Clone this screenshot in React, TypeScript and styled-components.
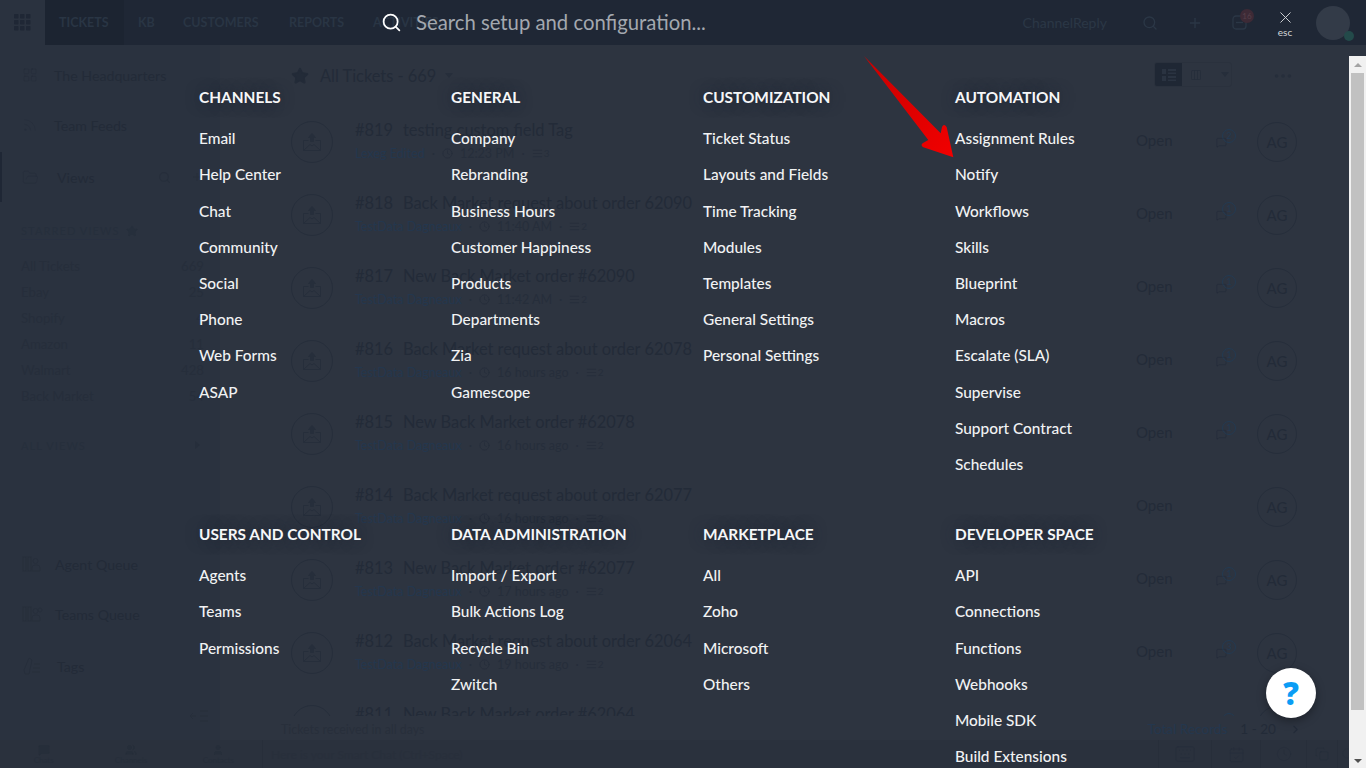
import React from "react";
import styled, { createGlobalStyle } from "styled-components";
import {
  LayoutGrid, Rss, FolderOpen, Search, Plus, Star, X, Clock, Keyboard, ChevronRight,
  MoreHorizontal, MessageSquare, User, Users, Columns3, CalendarCheck, Copy, AlignJustify,
} from "lucide-react";

const Global = createGlobalStyle`
  html, body { margin: 0; padding: 0; height: 100%; overflow: hidden; background: #2d3440; }
  * { box-sizing: border-box; }
  body { font-family: Lato, "Liberation Sans", sans-serif; }
`;

const dim = "#232b38";
const dimLine = "#262e3b";
const dimBlue = "#24374e";

const Page = styled.div`
  position: relative;
  width: 1366px;
  height: 768px;
  overflow: hidden;
  display: flex;
  flex-direction: column;
  background: #2d3440;
  color: ${dim};
`;

/* ---------- dimmed application behind the overlay ---------- */
const TopBar = styled.header`
  height: 45px;
  flex: none;
  display: flex;
  align-items: center;
  background: #1f2735;
`;
const AppTile = styled.div`
  width: 45px;
  height: 45px;
  display: flex;
  align-items: center;
  justify-content: center;
  background: #2a323f;
  color: #1f2735;
`;
const NavTab = styled.div<{ $active?: boolean; $width: number }>`
  width: ${(p) => p.$width}px;
  height: 45px;
  padding-left: 14px;
  display: flex;
  align-items: center;
  font-size: 12.5px;
  font-weight: 700;
  color: #293544;
  background: ${(p) => (p.$active ? "#1c2431" : "transparent")};
`;
const TopRight = styled.div`
  margin-left: auto;
  display: flex;
  align-items: center;
  height: 45px;
  padding-right: 16px;
`;
const Org = styled.span`
  font-size: 14px;
  color: #2b3746;
  margin-right: 35px;
`;
const TopIcon = styled.span<{ $gap: number }>`
  position: relative;
  display: flex;
  color: #2b3746;
  margin-right: ${(p) => p.$gap}px;
`;
const NotifyBadge = styled.span`
  position: absolute;
  top: -6px;
  left: 8px;
  width: 14px;
  height: 14px;
  border-radius: 50%;
  background: #3d2a36;
  color: #55404a;
  font-size: 8px;
  line-height: 14px;
  text-align: center;
`;
const Avatar = styled.div`
  position: relative;
  width: 34px;
  height: 34px;
  border-radius: 50%;
  background: #333b48;
`;
const Presence = styled.span`
  position: absolute;
  right: -4px;
  bottom: -1px;
  width: 10px;
  height: 10px;
  border-radius: 50%;
  background: #234a4a;
`;

const Body = styled.div`
  flex: 1;
  min-height: 0;
  display: flex;
`;
const Sidebar = styled.aside`
  width: 220px;
  flex: none;
  display: flex;
  flex-direction: column;
  padding-top: 5px;
  background: #2a323f;
`;
const SideItem = styled.div<{ $active?: boolean; $top?: number }>`
  position: relative;
  height: 50px;
  flex: none;
  margin-top: ${(p) => p.$top ?? 0}px;
  padding-left: ${(p) => (p.$active ? 20 : 22)}px;
  display: flex;
  align-items: center;
  font-size: 14.2px;
  color: ${dim};
  border-left: ${(p) => (p.$active ? `2px solid #1f2735` : "none")};
`;
const IconSlot = styled.span<{ $w: number }>`
  width: ${(p) => p.$w}px;
  flex: none;
  display: flex;
  color: ${dimLine};
`;
const SideTools = styled.span`
  margin-left: auto;
  padding-right: 17px;
  display: flex;
  gap: 20px;
  color: ${dimLine};
`;
const SideLabel = styled.div<{ $top: number }>`
  margin: ${(p) => p.$top}px 21px 0;
  height: 18px;
  flex: none;
  display: flex;
  align-items: center;
  gap: 6px;
  font-size: 11px;
  letter-spacing: 1.1px;
  color: #262f3c;
`;
const Underlined = styled.span`
  border-bottom: 1px solid #283040;
  line-height: 17px;
`;
const Caret = styled.span`
  margin-left: auto;
  width: 0;
  height: 0;
  border-top: 4px solid transparent;
  border-bottom: 4px solid transparent;
  border-left: 5px solid ${dimLine};
  margin-right: -1px;
`;
const ViewList = styled.ul`
  list-style: none;
  margin: 13px 0 0;
  padding: 0 16px 0 21px;
`;
const ViewRow = styled.li`
  height: 26px;
  display: flex;
  align-items: center;
  justify-content: space-between;
  font-size: 13.2px;
  color: #262e3b;
`;
const Grow = styled.div`
  flex: 1;
`;
const Collapse = styled.div`
  height: 49px;
  flex: none;
  padding: 0 11px 0 0;
  display: flex;
  align-items: center;
  justify-content: flex-end;
  color: ${dimLine};
`;

const Main = styled.main`
  flex: 1;
  min-width: 0;
  display: flex;
  flex-direction: column;
`;
const Toolbar = styled.div`
  height: 61px;
  flex: none;
  padding: 0 72px 0 71px;
  display: flex;
  align-items: center;
  font-size: 16.4px;
  color: ${dim};
`;
const StarSlot = styled.span`
  width: 29px;
  display: flex;
`;
const DownCaret = styled.span`
  width: 0;
  height: 0;
  margin-left: 9px;
  border-left: 4px solid transparent;
  border-right: 4px solid transparent;
  border-top: 5px solid ${dimLine};
`;
const ViewSwitch = styled.div`
  margin-left: auto;
  margin-bottom: 2px;
  display: flex;
  align-items: center;
  height: 25px;
  width: 78px;
  border: 1px solid #2a313d;
  border-radius: 3px;
  overflow: hidden;
`;
const SwitchCell = styled.span<{ $on?: boolean; $w: number }>`
  width: ${(p) => p.$w}px;
  height: 100%;
  display: flex;
  align-items: center;
  justify-content: center;
  background: ${(p) => (p.$on ? "#1f2734" : "transparent")};
  color: ${(p) => (p.$on ? "#2a3341" : dimLine)};
`;
const Dots = styled.span`
  margin-left: 40px;
  display: flex;
  color: ${dimLine};
`;
const List = styled.div`
  height: 610px;
  flex: none;
  overflow: hidden;
`;
const Row = styled.div`
  height: 73px;
  padding: 0 69px 2px 71px;
  display: flex;
  align-items: center;
`;
const RowBadge = styled.span`
  width: 42px;
  height: 42px;
  flex: none;
  border-radius: 50%;
  border: 1px solid ${dimLine};
  display: flex;
  align-items: center;
  justify-content: center;
  color: ${dimLine};
`;
const RowText = styled.div`
  flex: 1;
  min-width: 0;
  margin-left: 22px;
  align-self: flex-start;
  padding-top: 13px;
`;
const RowTitle = styled.div`
  height: 22px;
  line-height: 22px;
  font-size: 16.4px;
  white-space: nowrap;
  color: ${dim};
`;
const RowId = styled.span`
  display: inline-block;
  width: 48px;
`;
const RowMeta = styled.div`
  margin-top: 3px;
  height: 18px;
  display: flex;
  align-items: center;
  gap: 7px;
  font-size: 12.5px;
  color: ${dimLine};
`;
const Contact = styled.span`
  color: ${dimBlue};
`;
const MetaCount = styled.span`
  display: flex;
  align-items: flex-start;
  gap: 1px;
  font-size: 10px;
  line-height: 10px;
`;
const Status = styled.span`
  width: 80px;
  flex: none;
  font-size: 15px;
  margin-bottom: 4px;
  color: ${dim};
`;
const Thread = styled.span`
  position: relative;
  width: 41px;
  height: 20px;
  flex: none;
  padding-top: 5px;
  color: ${dimLine};
  display: flex;
  align-items: flex-start;
`;
const ThreadCount = styled.span`
  position: absolute;
  left: 6px;
  top: -3px;
  width: 14px;
  height: 14px;
  border: 1px solid #233a52;
  border-radius: 50%;
  font-size: 9px;
  line-height: 12px;
  text-align: center;
  color: #233a52;
`;
const Assignee = styled.span`
  width: 40px;
  height: 40px;
  flex: none;
  border-radius: 50%;
  border: 1px solid ${dimLine};
  display: flex;
  align-items: center;
  justify-content: center;
  font-size: 15px;
  color: ${dim};
`;
const ListFooter = styled.div`
  height: 24px;
  flex: none;
  padding: 2px 0 0 61px;
  display: flex;
  align-items: center;
  font-size: 12.4px;
  color: #282f3b;
`;
const Records = styled.span`
  margin-left: auto;
  margin-right: 64px;
  display: flex;
  align-items: center;
  gap: 13px;
  font-size: 13.6px;
  color: ${dim};
`;
const RecordsLabel = styled.span`
  color: ${dimBlue};
`;
const BottomBar = styled.footer`
  height: 28px;
  flex: none;
  display: flex;
  align-items: stretch;
  background: #2a313d;
`;
const BottomTabs = styled.div`
  width: 263px;
  display: flex;
  border-right: 1px solid #272e3a;
`;
const BottomTab = styled.div`
  flex: 1;
  display: flex;
  flex-direction: column;
  align-items: center;
  justify-content: center;
  font-size: 8px;
  line-height: 9px;
  color: #262e3a;
`;
const SmartChat = styled.div`
  padding-left: 8px;
  display: flex;
  align-items: center;
  font-size: 12px;
  color: #282f3b;
`;
const BottomTools = styled.div`
  margin-left: auto;
  display: flex;
  padding-right: 9px;
`;
const BottomTool = styled.span<{ $w: number }>`
  width: ${(p) => p.$w}px;
  display: flex;
  align-items: center;
  justify-content: center;
  border-left: 1px solid #272e3a;
  color: ${dimLine};
`;

/* ---------- setup overlay ---------- */
const Overlay = styled.div`
  position: absolute;
  inset: 0;
  overflow: hidden;
`;
const SearchBar = styled.div`
  height: 45px;
  padding: 0 0 1px 381px;
  display: flex;
  align-items: center;
  gap: 14px;
  color: #fff;
`;
const SearchText = styled.span`
  font-size: 20.3px;
  color: #a3a8af;
`;
const Close = styled.div`
  position: absolute;
  top: 8px;
  left: 1271px;
  width: 28px;
  display: flex;
  flex-direction: column;
  align-items: center;
  color: #d4d6d9;
  font-size: 10px;
  line-height: 10px;
`;
const Panel = styled.div`
  padding: 41px 0 0 199px;
  display: grid;
  grid-template-columns: repeat(4, 252px);
  row-gap: 40.9px;
`;
const Heading = styled.h3`
  margin: 0 0 12.2px;
  height: 22px;
  line-height: 22px;
  font-size: 15.4px;
  font-weight: 700;
  color: #f6f7f8;
  white-space: nowrap;
  text-shadow: 0 0 14px rgba(31, 39, 53, 0.9);
`;
const Links = styled.ul`
  list-style: none;
  margin: 0;
  padding: 0;
`;
const LinkItem = styled.li`
  height: 36.2px;
  line-height: 36.2px;
  font-size: 15.4px;
  font-weight: 500;
  color: #f1f2f3;
  white-space: nowrap;
`;
const Scrollbar = styled.div`
  position: absolute;
  top: 56px;
  right: 0;
  bottom: 0;
  width: 17px;
  padding: 0 2px;
  display: flex;
  flex-direction: column;
  align-items: center;
  background: #f1f1f1;
`;
const ScrollUp = styled.span`
  width: 0;
  height: 0;
  margin: 7px 0 6px;
  border-left: 4px solid transparent;
  border-right: 4px solid transparent;
  border-bottom: 4px solid #a3a3a3;
`;
const ScrollThumb = styled.span`
  width: 13px;
  height: 637px;
  background: #c1c1c1;
`;
const ScrollDown = styled.span`
  width: 0;
  height: 0;
  margin-top: auto;
  margin-bottom: 5px;
  border-left: 4px solid transparent;
  border-right: 4px solid transparent;
  border-top: 4px solid #505050;
`;
const Help = styled.button`
  position: absolute;
  left: 1266px;
  top: 668px;
  width: 50px;
  height: 50px;
  padding: 0;
  border: none;
  border-radius: 50%;
  background: #fff;
  box-shadow: 0 3px 10px rgba(0, 0, 0, 0.35);
  color: #0b9df5;
  font-family: "Open Sans", sans-serif;
  font-size: 31px;
  font-weight: 800;
  line-height: 50px;
  text-align: center;
`;
const ArrowArt = styled.svg`
  position: absolute;
  left: 860px;
  top: 52px;
`;

const sections: [string, string[]][] = [
  ["CHANNELS", ["Email", "Help Center", "Chat", "Community", "Social", "Phone", "Web Forms", "ASAP"]],
  ["GENERAL", ["Company", "Rebranding", "Business Hours", "Customer Happiness", "Products", "Departments", "Zia", "Gamescope"]],
  ["CUSTOMIZATION", ["Ticket Status", "Layouts and Fields", "Time Tracking", "Modules", "Templates", "General Settings", "Personal Settings"]],
  ["AUTOMATION", ["Assignment Rules", "Notify", "Workflows", "Skills", "Blueprint", "Macros", "Escalate (SLA)", "Supervise", "Support Contract", "Schedules"]],
  ["USERS AND CONTROL", ["Agents", "Teams", "Permissions"]],
  ["DATA ADMINISTRATION", ["Import / Export", "Bulk Actions Log", "Recycle Bin", "Zwitch"]],
  ["MARKETPLACE", ["All", "Zoho", "Microsoft", "Others"]],
  ["DEVELOPER SPACE", ["API", "Connections", "Functions", "Webhooks", "Mobile SDK", "Build Extensions"]],
];

const tickets = [
  ["#819", "testing custom field Tag", "Lexeg Edited", "12:23 PM", "2", "3"],
  ["#818", "Back Market request about order 62090", "TestData Dagneaux", "11:40 AM", "1", "2"],
  ["#817", "New Back Market order #62090", "TestData Dagneaux", "11:42 AM", "1", "2"],
  ["#816", "Back Market request about order 62078", "TestData Dagneaux", "16 hours ago", "1", "2"],
  ["#815", "New Back Market order #62078", "TestData Dagneaux", "16 hours ago", "1", "2"],
  ["#814", "Back Market request about order 62077", "TestData Dagneaux", "16 hours ago", "", "2"],
  ["#813", "New Back Market order #62077", "TestData Dagneaux", "17 hours ago", "1", "2"],
  ["#812", "Back Market request about order 62064", "TestData Dagneaux", "19 hours ago", "3", "2"],
  ["#811", "New Back Market order #62064", "TestData Dagneaux", "19 hours ago", "1", "2"],
];

const views = [
  ["All Tickets", "669"], ["Ebay", "25"], ["Shopify", "4"],
  ["Amazon", "11"], ["Walmart", "428"], ["Back Market", "54"],
];

const GridDots = () => (
  <svg width="17" height="17" viewBox="0 0 17 17" fill="currentColor">
    {[0, 6, 12].map((y) =>
      [0, 6, 12].map((x) => <rect key={`${x}-${y}`} x={x} y={y} width="4.500" height="4.500" rx="0.800" />)
    )}
  </svg>
);

const NoteIcon = () => (
  <svg width="15" height="15" viewBox="0 0 15 15" fill="none" stroke="currentColor" strokeWidth="1.300">
    <rect x="1" y="1" width="13" height="13" rx="3" />
    <path d="M4 7.500h7" />
  </svg>
);

const MailUp = () => (
  <svg width="20" height="20" viewBox="0 0 20 20" fill="none" stroke="currentColor" strokeWidth="1">
    <path d="M1.500 8.500h5M13.500 8.500h5v10h-17v-10M1.500 18.500l6.500-6 2 1.500 2-1.500 6.500 6" />
    <path d="M10 1.500l3.500 4H11.500v4h-3v-4H6.500z" fill="currentColor" />
  </svg>
);

const TicketsIcon = ({ people }: { people?: boolean }) => (
  <svg width="22" height="20" viewBox="0 0 22 20" fill="none" stroke="currentColor" strokeWidth="1">
    <rect x="1" y="3" width="3" height="14" />
    <rect x="6" y="3" width="3" height="14" />
    <circle cx="13.500" cy="7" r="2.500" />
    <path d="M10 17v-3a3 3 0 0 1 3-3h2a3 3 0 0 1 3 3v3z" />
    {people && <circle cx="18" cy="6" r="2" />}
  </svg>
);

const TagIcon = () => (
  <svg width="20" height="20" viewBox="0 0 20 20" fill="none" stroke="currentColor" strokeWidth="1">
    <path d="M7 2L2 14l1 4h4l3-14z" />
    <path d="M12 8h6M11 12h7M10 16h8" />
  </svg>
);

const CollapseIcon = () => (
  <svg width="20" height="14" viewBox="0 0 20 14" fill="none" stroke="currentColor" strokeWidth="1">
    <path d="M7 7H1M4 4L1 7l3 3M11 2h8M11 7h8M11 12h8" />
  </svg>
);

const ListIcon = () => (
  <svg width="14" height="12" viewBox="0 0 14 12" fill="currentColor">
    <rect x="0" y="0" width="4" height="5" />
    <rect x="0" y="7" width="4" height="5" />
    <rect x="6" y="0" width="8" height="2" />
    <rect x="6" y="3.500" width="8" height="1.500" />
    <rect x="6" y="7" width="8" height="2" />
    <rect x="6" y="10.500" width="8" height="1.500" />
  </svg>
);

export default function App() {
  return (
    <Page>
      <Global />
      <TopBar>
        <AppTile><GridDots /></AppTile>
        <NavTab $active $width={79}>TICKETS</NavTab>
        <NavTab $width={45}>KB</NavTab>
        <NavTab $width={106}>CUSTOMERS</NavTab>
        <NavTab $width={84}>REPORTS</NavTab>
        <NavTab $width={100}>ACTIVITIES</NavTab>
        <TopRight>
          <Org>ChannelReply</Org>
          <TopIcon $gap={29}><Search size={16} /></TopIcon>
          <TopIcon $gap={29}><Plus size={16} /></TopIcon>
          <TopIcon $gap={69}><NoteIcon /><NotifyBadge>16</NotifyBadge></TopIcon>
          <Avatar><Presence /></Avatar>
        </TopRight>
      </TopBar>

      <Body>
        <Sidebar>
          <SideItem><IconSlot $w={32}><LayoutGrid size={16} strokeWidth={1} /></IconSlot>The Headquarters</SideItem>
          <SideItem><IconSlot $w={32}><Rss size={16} strokeWidth={1} /></IconSlot>Team Feeds</SideItem>
          <SideItem $active $top={2}>
            <IconSlot $w={35}><FolderOpen size={17} strokeWidth={1} /></IconSlot>Views
            <SideTools><Search size={13} /><Plus size={12} /></SideTools>
          </SideItem>
          <SideLabel $top={20}><Underlined>STARRED VIEWS</Underlined> <Star size={12} fill="currentColor" /></SideLabel>
          <ViewList>
            {views.map(([name, n]) => (
              <ViewRow key={name}><span>{name}</span><span>{n}</span></ViewRow>
            ))}
          </ViewList>
          <SideLabel $top={27}>ALL VIEWS<Caret /></SideLabel>
          <Grow />
          <SideItem><IconSlot $w={33}><TicketsIcon /></IconSlot>Agent Queue</SideItem>
          <SideItem><IconSlot $w={33}><TicketsIcon people /></IconSlot>Teams Queue</SideItem>
          <SideItem $top={2}><IconSlot $w={35}><TagIcon /></IconSlot>Tags</SideItem>
          <Collapse><CollapseIcon /></Collapse>
        </Sidebar>

        <Main>
          <Toolbar>
            <StarSlot><Star size={18} fill="currentColor" /></StarSlot>
            <span>All Tickets - 669</span>
            <DownCaret />
            <ViewSwitch>
              <SwitchCell $on $w={28}><ListIcon /></SwitchCell>
              <SwitchCell $w={29}><Columns3 size={12} /></SwitchCell>
              <SwitchCell $w={21}><DownCaret /></SwitchCell>
            </ViewSwitch>
            <Dots><MoreHorizontal size={22} fill="currentColor" /></Dots>
          </Toolbar>
          <List>
            {tickets.map(([id, title, who, when, count, notes]) => (
              <Row key={id}>
                <RowBadge><MailUp /></RowBadge>
                <RowText>
                  <RowTitle><RowId>{id}</RowId>{title}</RowTitle>
                  <RowMeta>
                    <Contact>{who}</Contact>
                    <span>·</span>
                    <Clock size={11} />
                    <span>{when}</span>
                    <span>·</span>
                    <MetaCount><AlignJustify size={11} />{notes}</MetaCount>
                  </RowMeta>
                </RowText>
                <Status>Open</Status>
                <Thread>
                  {count && <MessageSquare size={11} />}
                  {count && <ThreadCount>{count}</ThreadCount>}
                </Thread>
                <Assignee>AG</Assignee>
              </Row>
            ))}
          </List>
          <ListFooter>
            Tickets received in all days
            <Records>
              <RecordsLabel>Total Records</RecordsLabel>
              <span>1 - 20</span>
              <ChevronRight size={13} />
            </Records>
          </ListFooter>
        </Main>
      </Body>

      <BottomBar>
        <BottomTabs>
          <BottomTab><MessageSquare size={12} fill="currentColor" />Chats</BottomTab>
          <BottomTab><Users size={12} fill="currentColor" />Channels</BottomTab>
          <BottomTab><User size={12} fill="currentColor" />Contacts</BottomTab>
        </BottomTabs>
        <SmartChat>Here is your Smart Chat (Ctrl+Space)</SmartChat>
        <BottomTools>
          <BottomTool $w={53}><Keyboard size={22} strokeWidth={1} /></BottomTool>
          <BottomTool $w={49}><CalendarCheck size={17} strokeWidth={1} /></BottomTool>
          <BottomTool $w={46}><Clock size={16} strokeWidth={1} /></BottomTool>
          <BottomTool $w={31}><Copy size={14} strokeWidth={1} /></BottomTool>
          <BottomTool $w={20}><Search size={14} strokeWidth={1} /></BottomTool>
        </BottomTools>
      </BottomBar>

      <Overlay>
        <SearchBar>
          <Search size={21} strokeWidth={2} />
          <SearchText>Search setup and configuration...</SearchText>
        </SearchBar>
        <Close><X size={19} strokeWidth={1.2} />esc</Close>
        <Panel>
          {sections.map(([title, items]) => (
            <section key={title}>
              <Heading>{title}</Heading>
              <Links>
                {items.map((item) => <LinkItem key={item}>{item}</LinkItem>)}
              </Links>
            </section>
          ))}
        </Panel>
        <Scrollbar>
          <ScrollUp />
          <ScrollThumb />
          <ScrollDown />
        </Scrollbar>
        <Help>?</Help>
        <ArrowArt width="100" height="112" viewBox="0 0 100 112">
          <defs>
            <linearGradient id="arrowFill" x1="0" y1="0" x2="1" y2="1">
              <stop offset="0" stopColor="#c80000" />
              <stop offset="1" stopColor="#f20000" />
            </linearGradient>
          </defs>
          <path
            d="M4 4 L80.700 81.300 L82 75 Q84 71 86.700 75.300 L93.300 105.300 L63.300 95.300 Q60 93 63 91 L68.300 88 Z"
            fill="url(#arrowFill)"
          />
        </ArrowArt>
      </Overlay>
    </Page>
  );
}
